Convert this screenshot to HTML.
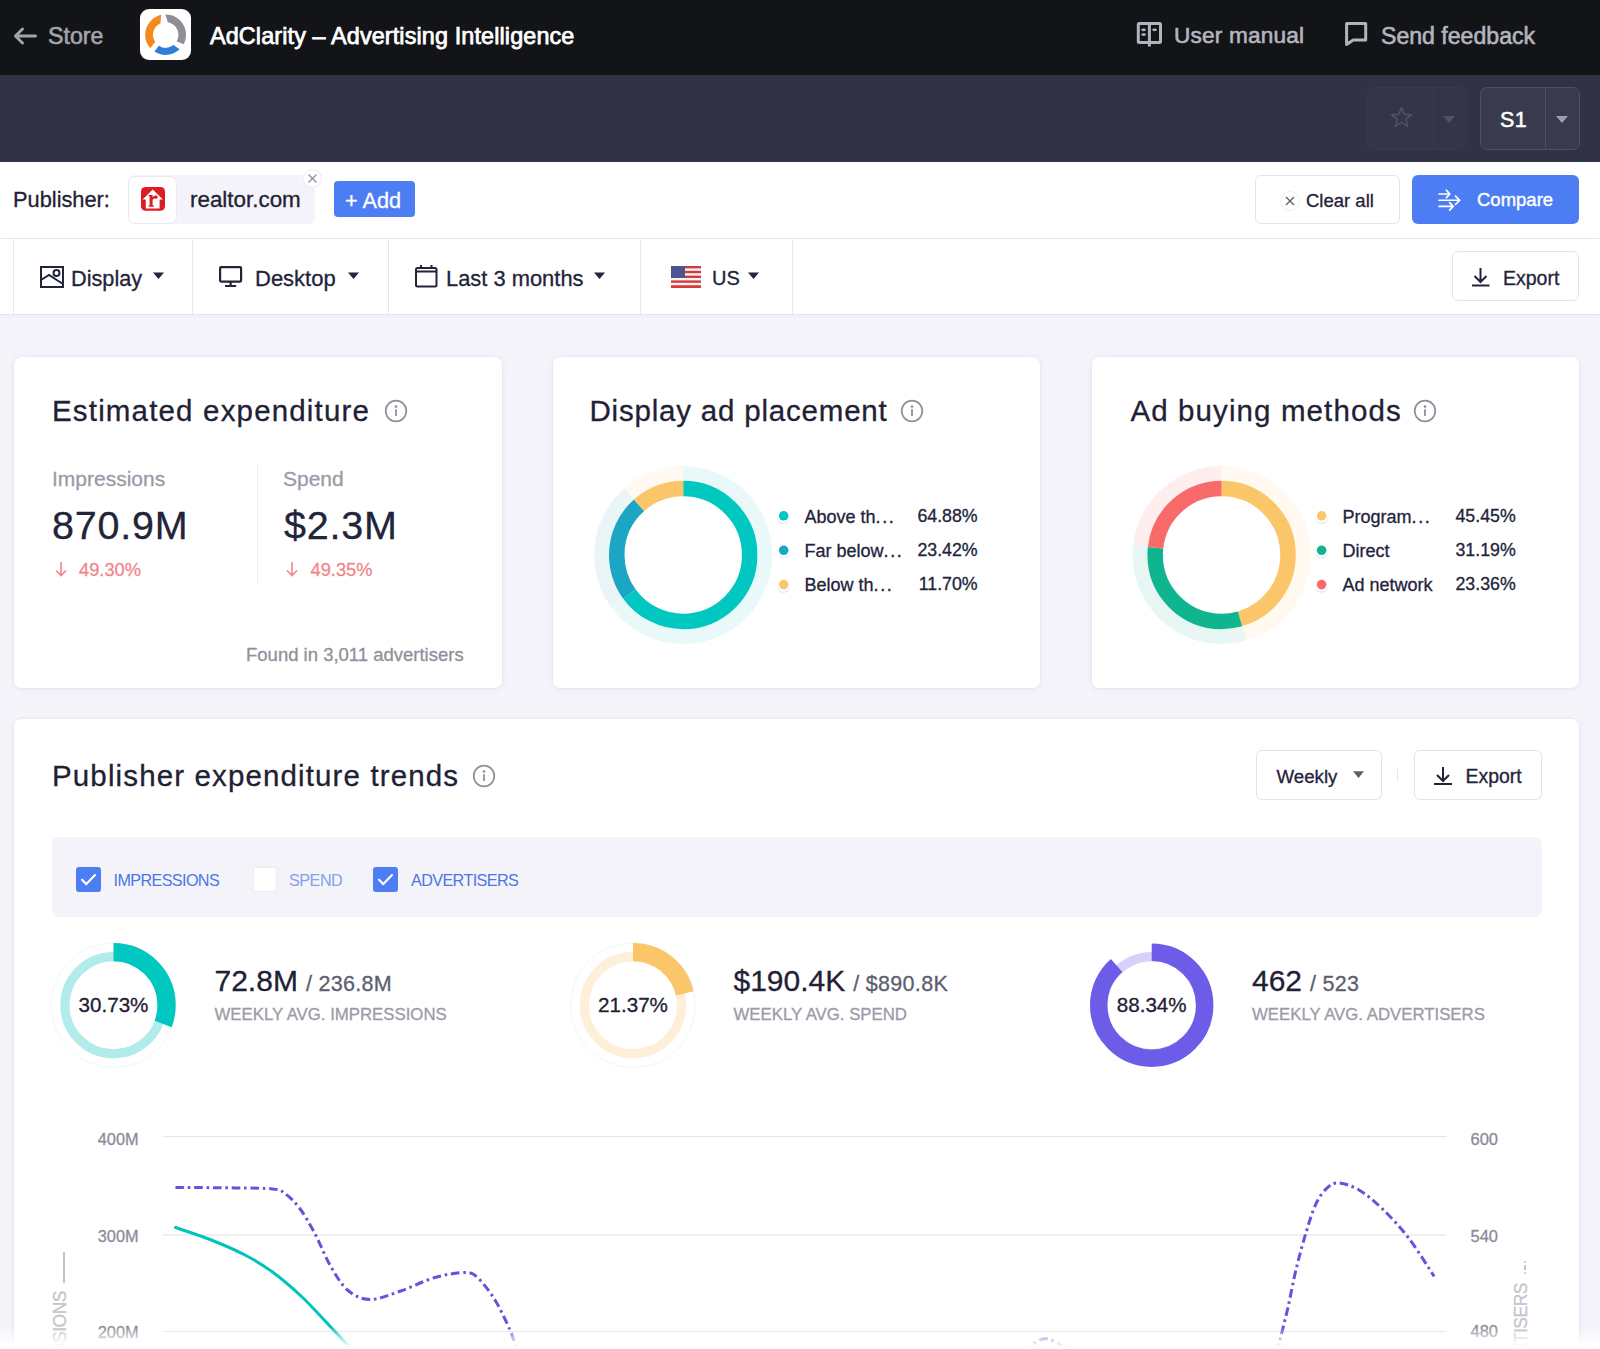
<!DOCTYPE html>
<html><head><meta charset="utf-8">
<style>
*{box-sizing:border-box;margin:0;padding:0}
html,body{width:1600px;height:1349px;overflow:hidden;background:#f5f4fa;font-family:"Liberation Sans",sans-serif;color:#1f2135}
.abs{position:absolute}
.t{position:absolute;white-space:nowrap;line-height:1;-webkit-text-stroke-width:.3px}
#top{position:absolute;left:0;top:0;width:1600px;height:75px;background:#131418}
#bar2{position:absolute;left:0;top:75px;width:1600px;height:87px;background:#323246}
#pub{position:absolute;left:0;top:162px;width:1600px;height:76px;background:#fff}
#publine{position:absolute;left:0;top:238px;width:1600px;height:1px;background:#e6e6ee;z-index:2}
#flt{position:absolute;left:0;top:238px;width:1600px;height:77px;background:#fff;border-bottom:1px solid #e4e4ec;box-shadow:0 1px 4px rgba(60,60,120,.04)}
.btn{position:absolute;border:1px solid #e3e3ea;border-radius:6px;background:#fff}
.card{position:absolute;background:#fff;border-radius:7px;box-shadow:0 0 0 .5px rgba(50,50,110,.06),0 1px 7px rgba(50,50,120,.07)}
.gray{color:#9a9ba6}
.vdiv{position:absolute;top:0;width:1px;height:76px;background:#e6e6ee}
</style></head>
<body>
<!-- TOP BAR -->
<div id="top">
  <svg class="abs" style="left:12px;top:26px" width="26" height="20" viewBox="0 0 26 20"><path d="M23.5 10H3.5M10.5 3L3.5 10l7 7" stroke="#a2a3ab" stroke-width="3" fill="none" stroke-linecap="round" stroke-linejoin="round"/></svg>
  <div class="t" style="left:48px;top:25px;font-size:23.2px;color:#a3a4ac;-webkit-text-stroke-width:.6px">Store</div>
  <div class="abs" style="left:140px;top:9px;width:51px;height:51px;background:#fff;border-radius:9px"></div>
  <svg class="abs" style="left:140px;top:9px" width="51" height="51" viewBox="0 0 51 51">
<path fill="#f28a1f" d="M10.23 39.25A20.5 20.5 0 0 1 21.09 5.83L20.53 14.20A12.7 12.7 0 0 0 15.17 32.90Z"/>
<path fill="#8e8e94" d="M25.35 5.50A20.3 20.3 0 0 1 43.62 35.33L36.59 32.34A12.7 12.7 0 0 0 27.91 13.29Z"/>
<path fill="#2f7fd6" d="M39.66 40.26A20.1 20.1 0 0 1 14.46 42.46L18.86 36.74A12.9 12.9 0 0 0 33.46 36.10Z"/>
</svg>
  <div class="t" style="left:210px;top:25px;font-size:23.4px;color:#fff;-webkit-text-stroke:.75px #fff;letter-spacing:.12px">AdClarity – Advertising Intelligence</div>
  <svg class="abs" style="left:1136px;top:21px" width="27" height="27" viewBox="0 0 27 27" fill="none" stroke="#b2b3bc" stroke-width="3">
    <rect x="2.3" y="2.6" width="22.2" height="19" rx="1"/>
    <path d="M13.4 1.5V25.5"/>
    <g fill="#b2b3bc" stroke="none"><ellipse cx="7.6" cy="8.8" rx="2.4" ry="1.4"/><ellipse cx="7.6" cy="13.6" rx="2.4" ry="1.4"/><ellipse cx="18.6" cy="8.8" rx="2.4" ry="1.4"/></g>
  </svg>
  <div class="t" style="left:1174px;top:25px;font-size:22.6px;color:#b4b5bd;-webkit-text-stroke-width:.6px;letter-spacing:.2px">User manual</div>
  <svg class="abs" style="left:1340px;top:15px" width="34" height="34" viewBox="0 0 34 34" fill="none" stroke="#b2b3bc" stroke-width="3" stroke-linejoin="round">
    <path d="M6.6 29.5V8.5H25.7V24.9H13.2Z"/>
  </svg>
  <div class="t" style="left:1381px;top:25px;font-size:23.1px;color:#b4b5bd;-webkit-text-stroke-width:.6px">Send feedback</div>
</div>
<div id="bar2">
  <div class="abs" style="left:1367px;top:12px;width:100px;height:63px;border:1px solid #38384c;background:#35354a;border-radius:7px"></div>
  <div class="abs" style="left:1433px;top:13px;width:1px;height:61px;background:#3a3a4f"></div>
  <svg class="abs" style="left:1390px;top:106px;top:106px" width="24" height="24" viewBox="0 0 24 24"></svg>
  <svg class="abs" style="left:1390px;top:31px" width="24" height="24" viewBox="0 0 24 24"><path d="M11.5 1.5L14.2 8.4 21.4 8.8 15.8 13.4 17.7 20.4 11.5 16.4 5.3 20.4 7.2 13.4 1.6 8.8 8.8 8.4Z" fill="none" stroke="#50516a" stroke-width="1.6" stroke-linejoin="round"/></svg>
  <svg class="abs" style="left:1443px;top:41px" width="12" height="8" viewBox="0 0 12 8"><path d="M0 0H12L6 7Z" fill="#50516a"/></svg>
  <div class="abs" style="left:1480px;top:12px;width:100px;height:63px;border:1px solid #4e4f63;background:#3a3a4e;border-radius:7px"></div>
  <div class="abs" style="left:1545px;top:13px;width:1px;height:61px;background:#4e4f63"></div>
  <div class="t" style="left:1500px;top:35px;font-size:21.5px;color:#fff;-webkit-text-stroke:.5px #fff;letter-spacing:.5px">S1</div>
  <svg class="abs" style="left:1556px;top:41px" width="12" height="8" viewBox="0 0 12 8"><path d="M0 0H12L6 7Z" fill="#9d9eab"/></svg>
</div>
<!-- PUBLISHER ROW -->
<div id="pub">
  <div class="t" style="left:13px;top:27px;font-size:21.8px">Publisher:</div>
  <div class="abs" style="left:128px;top:13px;width:187px;height:49px;background:#f3f3f9;border-radius:7px"></div>
  <div class="abs" style="left:128px;top:14px;width:49px;height:48px;background:#fff;border:1px solid #e9e9f0;border-radius:7px"></div>
  <svg class="abs" style="left:140px;top:24px" width="26" height="26" viewBox="0 0 26 26">
    <rect x="1" y="1" width="24" height="23.7" rx="4.5" fill="#dd1d26"/>
    <path d="M12.75 3.4L22.9 13.5H19.6V22.5H5.8V13.5H2.6Z" fill="#fff"/>
    <path d="M8.6 9.1H12.6V11.2Q13.6 9.6 15.6 9.5L16.3 12.2Q13.6 11.8 12.6 13.8V19.5H14V20.7H8.5V19.5H9.6V10.3H8.6Z" fill="#dd1d26"/>
    <circle cx="16.1" cy="11.1" r="1.7" fill="#dd1d26"/>
  </svg>
  <div class="t" style="left:190px;top:27px;font-size:22.4px;color:#1f2135">realtor.com</div>
  <div class="abs" style="left:304px;top:8px;width:17px;height:17px;border-radius:50%;background:#fff;box-shadow:0 0 0 1px #ececf2"></div>
  <svg class="abs" style="left:307px;top:11px" width="11" height="11" viewBox="0 0 11 11"><path d="M1.5 1.5l8 8M9.5 1.5l-8 8" stroke="#8b8c96" stroke-width="1.2"/></svg>
  <div class="abs" style="left:334px;top:19px;width:81px;height:36px;background:#4d7df3;border-radius:4px"></div>
  <div class="t" style="left:345px;top:28px;font-size:21.7px;color:#fff">+ Add</div>
  <div class="btn" style="left:1255px;top:13px;width:145px;height:49px"></div>
  <div class="abs" style="left:1281px;top:30px;width:18px;height:18px;border-radius:50%;box-shadow:0 0 0 1px #f0f0f4"></div>
  <svg class="abs" style="left:1285px;top:34px" width="10" height="10" viewBox="0 0 10 10"><path d="M1 1l8 8M9 1l-8 8" stroke="#5c5d68" stroke-width="1.3"/></svg>
  <div class="t" style="left:1306px;top:30px;font-size:18.5px;color:#1f2135">Clear all</div>
  <div class="abs" style="left:1412px;top:13px;width:167px;height:49px;background:#4d7df3;border-radius:6px"></div>
  <svg class="abs" style="left:1437px;top:26px" width="26" height="26" viewBox="0 0 26 26" fill="none" stroke="#fff" stroke-width="1.7" stroke-linecap="round" stroke-linejoin="round">
<path d="M2 6H12.75M9.4 2.2L12.8 6 9.4 9.7"/><path d="M2 12.25H22.75M18.5 8.2L22.75 12.25 18.5 16.4"/><path d="M2 18.4H16.25M12.6 14.7L16.25 18.4 12.6 22.2"/>
</svg>
  <div class="t" style="left:1477px;top:29px;font-size:18.5px;color:#fff;-webkit-text-stroke:.4px #fff">Compare</div>
</div>
<div id="publine"></div>
<!-- FILTER ROW -->
<div id="flt">
  <div class="vdiv" style="left:13px"></div>
  <div class="vdiv" style="left:192px"></div>
  <div class="vdiv" style="left:388px"></div>
  <div class="vdiv" style="left:640px"></div>
  <div class="vdiv" style="left:792px"></div>
  <svg class="abs" style="left:40px;top:28px" width="25" height="23" viewBox="0 0 25 23" fill="none" stroke="#22243a" stroke-width="2">
    <rect x="1" y="1" width="22" height="20"/><path d="M1 14l8-5 14 9"/><circle cx="16.5" cy="7" r="3"/>
  </svg>
  <div class="t" style="left:71px;top:30px;font-size:21.7px;color:#22243a">Display</div>
  <svg class="abs" style="left:153px;top:34px" width="11" height="8" viewBox="0 0 11 8"><path d="M0 0.5H11L5.5 7Z" fill="#22243a"/></svg>
  <svg class="abs" style="left:219px;top:28px" width="24" height="22" viewBox="0 0 24 22" fill="none" stroke="#22243a" stroke-width="2.2">
    <rect x="1.1" y="1.1" width="21" height="14.5" rx="1"/><path d="M11.6 16v3.5M6 20H17.2"/>
  </svg>
  <div class="t" style="left:255px;top:30px;font-size:22px;color:#22243a">Desktop</div>
  <svg class="abs" style="left:348px;top:34px" width="11" height="8" viewBox="0 0 11 8"><path d="M0 0.5H11L5.5 7Z" fill="#22243a"/></svg>
  <svg class="abs" style="left:415px;top:26px" width="23" height="24" viewBox="0 0 23 24" fill="none" stroke="#22243a" stroke-width="2">
    <rect x="1" y="4" width="20.5" height="18.5" rx="1.5"/><path d="M1 7.5H21.5M6 1V5M16.5 1V5"/>
  </svg>
  <div class="t" style="left:446px;top:30px;font-size:21.9px;color:#22243a">Last 3 months</div>
  <svg class="abs" style="left:594px;top:34px" width="11" height="8" viewBox="0 0 11 8"><path d="M0 0.5H11L5.5 7Z" fill="#22243a"/></svg>
  <svg class="abs" style="left:671px;top:28px" width="30" height="22" viewBox="0 0 30 22">
    <rect width="30" height="22" fill="#f4f4f4"/>
    <g fill="#d63a3a"><rect y="0" width="30" height="2.4"/><rect y="4.8" width="30" height="2.4"/><rect y="9.6" width="30" height="2.4"/><rect y="14.4" width="30" height="2.4"/><rect y="19.2" width="30" height="2.8"/></g>
    <rect width="14" height="12" fill="#4a5592"/>
  </svg>
  <div class="t" style="left:712px;top:30px;font-size:20px;color:#22243a">US</div>
  <svg class="abs" style="left:748px;top:34px" width="11" height="8" viewBox="0 0 11 8"><path d="M0 0.5H11L5.5 7Z" fill="#22243a"/></svg>
  <div class="btn" style="left:1452px;top:13px;width:127px;height:50px"></div>
  <svg class="abs" style="left:1471px;top:29px" width="20" height="20" viewBox="0 0 20 20" fill="none" stroke="#22243a" stroke-width="2">
    <path d="M9.5 1V15M3.5 9l6 6 6-6M1 18.5H18.5"/>
  </svg>
  <div class="t" style="left:1503px;top:31px;font-size:19.5px;color:#22243a">Export</div>
</div>
<!-- CARDS -->
<div class="card" style="left:13.5px;top:356.5px;width:488px;height:331px"></div>
<div class="card" style="left:552.5px;top:356.5px;width:487.5px;height:331px"></div>
<div class="card" style="left:1091.5px;top:356.5px;width:487px;height:331px"></div>
<div class="t" style="left:52px;top:395.9px;font-size:29.5px;letter-spacing:1.17px;color:#1f2135">Estimated expenditure</div>
<svg class="abs" style="left:384px;top:399px" width="24" height="24" viewBox="0 0 24 24"><circle cx="12" cy="12" r="10.3" fill="none" stroke="#8f909a" stroke-width="1.7"/><circle cx="12" cy="7.6" r="1.3" fill="#8f909a"/><path d="M12 10.3V17" stroke="#8f909a" stroke-width="1.8"/></svg>
<div class="t" style="left:589.5px;top:395.9px;font-size:29.5px;letter-spacing:.8px;color:#1f2135">Display ad placement</div>
<svg class="abs" style="left:900px;top:399px" width="24" height="24" viewBox="0 0 24 24"><circle cx="12" cy="12" r="10.3" fill="none" stroke="#8f909a" stroke-width="1.7"/><circle cx="12" cy="7.6" r="1.3" fill="#8f909a"/><path d="M12 10.3V17" stroke="#8f909a" stroke-width="1.8"/></svg>
<div class="t" style="left:1130.5px;top:395.9px;font-size:29.5px;letter-spacing:1.1px;color:#1f2135">Ad buying methods</div>
<svg class="abs" style="left:1413px;top:399px" width="24" height="24" viewBox="0 0 24 24"><circle cx="12" cy="12" r="10.3" fill="none" stroke="#8f909a" stroke-width="1.7"/><circle cx="12" cy="7.6" r="1.3" fill="#8f909a"/><path d="M12 10.3V17" stroke="#8f909a" stroke-width="1.8"/></svg>
<div class="t gray" style="left:52px;top:467.9px;font-size:21px;color:#9a9ba6">Impressions</div>
<div class="t" style="left:52px;top:506.2px;font-size:39.5px;letter-spacing:.8px;color:#22243a">870.9M</div>
<svg class="abs" style="left:54.5px;top:561px" width="12" height="16" viewBox="0 0 12 16"><path d="M6 1V14.5M1 9.5l5 5 5-5" fill="none" stroke="#ef878b" stroke-width="1.6"/></svg>
<div class="t" style="left:79px;top:560.5px;font-size:18.3px;color:#ef878b">49.30%</div>
<div class="abs" style="left:257px;top:463px;width:1px;height:121px;background:#ececf2"></div>
<div class="t" style="left:283px;top:467.9px;font-size:21px;color:#9a9ba6">Spend</div>
<div class="t" style="left:284px;top:506.2px;font-size:39.5px;letter-spacing:.8px;color:#22243a">$2.3M</div>
<svg class="abs" style="left:286px;top:561px" width="12" height="16" viewBox="0 0 12 16"><path d="M6 1V14.5M1 9.5l5 5 5-5" fill="none" stroke="#ef878b" stroke-width="1.6"/></svg>
<div class="t" style="left:310.5px;top:560.5px;font-size:18.3px;color:#ef878b">49.35%</div>
<div class="t" style="left:246px;top:645.6px;font-size:18.5px;color:#8f909b">Found in 3,011 advertisers</div>
<svg class="abs" style="left:0;top:0" width="1600" height="700">
<circle cx="683.2" cy="555" r="81.6" fill="none" stroke="#e9f8f8" stroke-width="14.8" stroke-dasharray="332.645 512.708" stroke-dashoffset="0.000" transform="rotate(-90 683.2 555)"/>
<circle cx="683.2" cy="555" r="81.6" fill="none" stroke="#eaf5f8" stroke-width="14.8" stroke-dasharray="120.076 512.708" stroke-dashoffset="-332.645" transform="rotate(-90 683.2 555)"/>
<circle cx="683.2" cy="555" r="81.6" fill="none" stroke="#fff9ef" stroke-width="14.8" stroke-dasharray="59.987 512.708" stroke-dashoffset="-452.721" transform="rotate(-90 683.2 555)"/>
<circle cx="683.2" cy="555" r="66.45" fill="none" stroke="#00c7c0" stroke-width="15.5" stroke-dasharray="270.885 417.518" stroke-dashoffset="0.000" transform="rotate(-90 683.2 555)"/>
<circle cx="683.2" cy="555" r="66.45" fill="none" stroke="#1ba7c4" stroke-width="15.5" stroke-dasharray="97.783 417.518" stroke-dashoffset="-270.885" transform="rotate(-90 683.2 555)"/>
<circle cx="683.2" cy="555" r="66.45" fill="none" stroke="#fbc56a" stroke-width="15.5" stroke-dasharray="48.850 417.518" stroke-dashoffset="-368.668" transform="rotate(-90 683.2 555)"/>
<circle cx="1221.6" cy="555" r="81.6" fill="none" stroke="#fff9ef" stroke-width="14.8" stroke-dasharray="233.026 512.708" stroke-dashoffset="0.000" transform="rotate(-90 1221.6 555)"/>
<circle cx="1221.6" cy="555" r="81.6" fill="none" stroke="#e8f7f3" stroke-width="14.8" stroke-dasharray="159.914 512.708" stroke-dashoffset="-233.026" transform="rotate(-90 1221.6 555)"/>
<circle cx="1221.6" cy="555" r="81.6" fill="none" stroke="#ffeeee" stroke-width="14.8" stroke-dasharray="119.769 512.708" stroke-dashoffset="-392.939" transform="rotate(-90 1221.6 555)"/>
<circle cx="1221.6" cy="555" r="66.45" fill="none" stroke="#fbc56a" stroke-width="15.5" stroke-dasharray="189.762 417.518" stroke-dashoffset="0.000" transform="rotate(-90 1221.6 555)"/>
<circle cx="1221.6" cy="555" r="66.45" fill="none" stroke="#0eb58f" stroke-width="15.5" stroke-dasharray="130.224 417.518" stroke-dashoffset="-189.762" transform="rotate(-90 1221.6 555)"/>
<circle cx="1221.6" cy="555" r="66.45" fill="none" stroke="#f96b6b" stroke-width="15.5" stroke-dasharray="97.532 417.518" stroke-dashoffset="-319.986" transform="rotate(-90 1221.6 555)"/>
<circle cx="783.7" cy="517.8" r="6.5" fill="#f0eff7"/><circle cx="783.7" cy="515.8" r="6.3" fill="#fff"/><circle cx="783.7" cy="515.8" r="4.8" fill="#00c7c0"/>
<circle cx="783.7" cy="552.3" r="6.5" fill="#f0eff7"/><circle cx="783.7" cy="550.3" r="6.3" fill="#fff"/><circle cx="783.7" cy="550.3" r="4.8" fill="#1ba7c4"/>
<circle cx="783.7" cy="586.6" r="6.5" fill="#f0eff7"/><circle cx="783.7" cy="584.6" r="6.3" fill="#fff"/><circle cx="783.7" cy="584.6" r="4.8" fill="#fbc56a"/>
<circle cx="1321.6" cy="517.8" r="6.5" fill="#f0eff7"/><circle cx="1321.6" cy="515.8" r="6.3" fill="#fff"/><circle cx="1321.6" cy="515.8" r="4.8" fill="#fbc56a"/>
<circle cx="1321.6" cy="552.3" r="6.5" fill="#f0eff7"/><circle cx="1321.6" cy="550.3" r="6.3" fill="#fff"/><circle cx="1321.6" cy="550.3" r="4.8" fill="#0eb58f"/>
<circle cx="1321.6" cy="586.6" r="6.5" fill="#f0eff7"/><circle cx="1321.6" cy="584.6" r="6.3" fill="#fff"/><circle cx="1321.6" cy="584.6" r="4.8" fill="#f96b6b"/>
</svg>
<div class="t" style="left:804.5px;top:507.5px;font-size:18px;color:#22243a">Above th<span style=letter-spacing:1.6px>..</span>.</div>
<div class="t" style="left:877.7px;width:100px;text-align:right;top:507.5px;font-size:17.8px;color:#22243a">64.88%</div>
<div class="t" style="left:804.5px;top:541.8px;font-size:18px;color:#22243a">Far below<span style=letter-spacing:1.6px>..</span>.</div>
<div class="t" style="left:877.7px;width:100px;text-align:right;top:541.8px;font-size:17.8px;color:#22243a">23.42%</div>
<div class="t" style="left:804.5px;top:576.1px;font-size:18px;color:#22243a">Below th<span style=letter-spacing:1.6px>..</span>.</div>
<div class="t" style="left:877.7px;width:100px;text-align:right;top:576.1px;font-size:17.8px;color:#22243a">11.70%</div>
<div class="t" style="left:1342.5px;top:507.5px;font-size:18px;color:#22243a">Program<span style=letter-spacing:1.6px>..</span>.</div>
<div class="t" style="left:1415.8px;width:100px;text-align:right;top:507.5px;font-size:17.8px;color:#22243a">45.45%</div>
<div class="t" style="left:1342.5px;top:541.8px;font-size:18px;color:#22243a">Direct</div>
<div class="t" style="left:1415.8px;width:100px;text-align:right;top:541.8px;font-size:17.8px;color:#22243a">31.19%</div>
<div class="t" style="left:1342.5px;top:576.1px;font-size:18px;color:#22243a">Ad network</div>
<div class="t" style="left:1415.8px;width:100px;text-align:right;top:576.1px;font-size:17.8px;color:#22243a">23.36%</div>
<!-- /CARDS -->
<!-- BIG -->
<div class="card" style="left:13.5px;top:719px;width:1565.5px;height:700px"></div>
<div class="t" style="left:52px;top:760.8px;font-size:29.5px;letter-spacing:1.13px;color:#1f2135">Publisher expenditure trends</div>
<svg class="abs" style="left:471.5px;top:764px" width="24" height="24" viewBox="0 0 24 24"><circle cx="12" cy="12" r="10.3" fill="none" stroke="#8f909a" stroke-width="1.7"/><circle cx="12" cy="7.6" r="1.3" fill="#8f909a"/><path d="M12 10.3V17" stroke="#8f909a" stroke-width="1.8"/></svg>
<div class="btn" style="left:1256px;top:750px;width:125.5px;height:49.5px"></div>
<div class="t" style="left:1276.5px;top:767.5px;font-size:18.7px;color:#22243a">Weekly</div>
<svg class="abs" style="left:1353px;top:771px" width="11" height="8" viewBox="0 0 11 8"><path d="M0 0.3H11L5.5 7Z" fill="#5f606c"/></svg>
<div class="abs" style="left:1397px;top:769px;width:1px;height:12px;background:#e3e3ea"></div>
<div class="btn" style="left:1414px;top:750px;width:127.5px;height:49.5px"></div>
<svg class="abs" style="left:1433px;top:766px" width="20" height="20" viewBox="0 0 20 20" fill="none" stroke="#22243a" stroke-width="2"><path d="M10 1V15M4 9l6 6 6-6M1 18H19"/></svg>
<div class="t" style="left:1465.5px;top:766.9px;font-size:19.4px;color:#22243a">Export</div>
<div class="abs" style="left:51.5px;top:836.8px;width:1490px;height:80.2px;background:#f3f3f9;border-radius:7px"></div>
<svg class="abs" style="left:76px;top:867px" width="25" height="25" viewBox="0 0 25 25"><rect x="0" y="0" width="25" height="25" rx="3" fill="#4d7df3"/><path d="M6 12.8l4.3 4.3 8.7-9" fill="none" stroke="#fff" stroke-width="2.2" stroke-linecap="round" stroke-linejoin="round"/></svg>
<div class="t" style="left:113.5px;top:871.9px;font-size:16.2px;letter-spacing:-.62px;-webkit-text-stroke-width:0;color:#4b77e4">IMPRESSIONS</div>
<div class="abs" style="left:252.5px;top:867px;width:24.5px;height:25px;background:#fff;border:1px solid #ebebf1;border-radius:3px"></div>
<div class="t" style="left:289px;top:871.9px;font-size:16.2px;letter-spacing:-.5px;-webkit-text-stroke-width:0;color:#85a2ec">SPEND</div>
<svg class="abs" style="left:373px;top:867px" width="25" height="25" viewBox="0 0 25 25"><rect x="0" y="0" width="25" height="25" rx="3" fill="#4d7df3"/><path d="M6 12.8l4.3 4.3 8.7-9" fill="none" stroke="#fff" stroke-width="2.2" stroke-linecap="round" stroke-linejoin="round"/></svg>
<div class="t" style="left:411px;top:871.9px;font-size:16.2px;letter-spacing:-.62px;-webkit-text-stroke-width:0;color:#4b77e4">ADVERTISERS</div>
<svg class="abs" style="left:0;top:900px" width="1600" height="200">
<circle cx="113.5" cy="105.2" r="62.3" fill="none" stroke="#eef2f4" stroke-width="0.8"/>
<circle cx="113.5" cy="105.2" r="48.6" fill="none" stroke="#b2ecea" stroke-width="9.2"/>
<circle cx="113.5" cy="105.2" r="53.1" fill="none" stroke="#00c7c0" stroke-width="18.2" stroke-dasharray="102.527 333.637" stroke-dashoffset="0.000" transform="rotate(-90 113.5 105.2)"/>
<circle cx="633" cy="105.2" r="62.3" fill="none" stroke="#eef2f4" stroke-width="0.8"/>
<circle cx="633" cy="105.2" r="48.6" fill="none" stroke="#fdefd8" stroke-width="9.2"/>
<circle cx="633" cy="105.2" r="53.1" fill="none" stroke="#fbc56a" stroke-width="18.2" stroke-dasharray="71.298 333.637" stroke-dashoffset="0.000" transform="rotate(-90 633 105.2)"/>
<circle cx="1151.7" cy="105.2" r="48.6" fill="none" stroke="#d7d0f8" stroke-width="9.2"/>
<circle cx="1151.7" cy="105.2" r="53" fill="none" stroke="#6c5ce7" stroke-width="17.4" stroke-dasharray="294.180 333.009" stroke-dashoffset="0.000" transform="rotate(-90 1151.7 105.2)"/>
</svg>
<div class="t" style="left:53.5px;width:120px;text-align:center;top:995.2px;font-size:20.6px;color:#1f2135">30.73%</div>
<div class="t" style="left:573px;width:120px;text-align:center;top:995.2px;font-size:20.6px;color:#1f2135">21.37%</div>
<div class="t" style="left:1091.7px;width:120px;text-align:center;top:995.2px;font-size:20.6px;color:#1f2135">88.34%</div>
<div class="t" style="left:214.5px;top:965.6px;font-size:30px;color:#1f2135">72.8M<span style="font-size:21.5px;color:#5c5e70;margin-left:8px;letter-spacing:.3px">/ 236.8M</span></div>
<div class="t" style="left:214.5px;top:1007.1px;font-size:16.8px;color:#9a9ba7">WEEKLY AVG. IMPRESSIONS</div>
<div class="t" style="left:733.5px;top:965.6px;font-size:30px;color:#1f2135">$190.4K<span style="font-size:21.5px;color:#5c5e70;margin-left:8px;letter-spacing:.3px">/ $890.8K</span></div>
<div class="t" style="left:733.5px;top:1007.1px;font-size:16.8px;color:#9a9ba7">WEEKLY AVG. SPEND</div>
<div class="t" style="left:1252px;top:965.6px;font-size:30px;color:#1f2135">462<span style="font-size:21.5px;color:#5c5e70;margin-left:8px;letter-spacing:.3px">/ 523</span></div>
<div class="t" style="left:1252px;top:1007.1px;font-size:16.8px;color:#9a9ba7">WEEKLY AVG. ADVERTISERS</div>
<!-- /BIG -->
<!-- CHART -->
<svg class="abs" style="left:0;top:1100px" width="1600" height="249" viewBox="0 1100 1600 249">
<rect x="163" y="1135.9" width="1283.5" height="1.2" fill="#e4e4ea"/>
<rect x="163" y="1234.4" width="1283.5" height="1.2" fill="#e4e4ea"/>
<rect x="163" y="1330.9" width="1283.5" height="1.2" fill="#e4e4ea"/>
<path d="M175.50 1227.50 C181.25 1229.50 198.42 1234.92 210.00 1239.50 C221.58 1244.08 234.58 1249.58 245.00 1255.00 C255.42 1260.42 263.17 1265.17 272.50 1272.00 C281.83 1278.83 291.92 1287.50 301.00 1296.00 C310.08 1304.50 318.50 1314.00 327.00 1323.00 C335.50 1332.00 346.17 1343.50 352.00 1350.00 C357.83 1356.50 360.33 1360.00 362.00 1362.00" fill="none" stroke="#00c3bd" stroke-width="3" stroke-linecap="round"/>
<path d="M175.50 1187.40 C185.42 1187.48 218.83 1187.65 235.00 1187.90 C251.17 1188.15 264.17 1187.97 272.50 1188.90 C280.83 1189.83 280.42 1190.19 285.00 1193.50 C289.58 1196.81 295.00 1202.04 300.00 1208.75 C305.00 1215.46 310.00 1224.38 315.00 1233.75 C320.00 1243.12 324.58 1255.62 330.00 1265.00 C335.42 1274.38 340.83 1284.25 347.50 1290.00 C354.17 1295.75 361.25 1299.29 370.00 1299.50 C378.75 1299.71 389.17 1294.92 400.00 1291.25 C410.83 1287.58 424.17 1280.62 435.00 1277.50 C445.83 1274.38 457.92 1272.50 465.00 1272.50 C472.08 1272.50 472.50 1272.92 477.50 1277.50 C482.50 1282.08 489.58 1291.25 495.00 1300.00 C500.42 1308.75 506.67 1322.50 510.00 1330.00 C513.33 1337.50 513.33 1339.17 515.00 1345.00 C516.67 1350.83 519.17 1361.67 520.00 1365.00" fill="none" stroke="#6453dc" stroke-width="3" stroke-dasharray="8.6 3.75 2.6 3.75"/>
<path d="M1272.00 1370.00 C1273.15 1365.67 1276.32 1354.08 1278.90 1344.00 C1281.48 1333.92 1284.63 1321.95 1287.50 1309.50 C1290.37 1297.05 1292.98 1282.23 1296.10 1269.30 C1299.22 1256.37 1302.83 1242.93 1306.20 1231.90 C1309.57 1220.87 1312.70 1210.53 1316.30 1203.10 C1319.90 1195.67 1323.97 1190.65 1327.80 1187.30 C1331.63 1183.95 1334.03 1182.52 1339.30 1183.00 C1344.57 1183.48 1352.22 1185.88 1359.40 1190.20 C1366.58 1194.52 1374.25 1201.00 1382.40 1208.90 C1390.55 1216.80 1399.67 1226.35 1408.30 1237.60 C1416.93 1248.85 1429.88 1269.93 1434.20 1276.40" fill="none" stroke="#6453dc" stroke-width="3" stroke-dasharray="8.6 3.75 2.6 3.75"/>
<path d="M1025.00 1352.00 C1026.33 1350.67 1029.50 1346.20 1033.00 1344.00 C1036.50 1341.80 1041.50 1338.63 1046.00 1338.80 C1050.50 1338.97 1056.33 1342.80 1060.00 1345.00 C1063.67 1347.20 1066.67 1350.83 1068.00 1352.00" fill="none" stroke="#6453dc" stroke-width="3" stroke-dasharray="8.6 3.75 2.6 3.75"/>
</svg>
<div class="t" style="left:38.5px;width:100px;text-align:right;top:1130.8px;font-size:16.3px;color:#8b8c97">400M</div>
<div class="t" style="left:38.5px;width:100px;text-align:right;top:1228.2px;font-size:16.3px;color:#8b8c97">300M</div>
<div class="t" style="left:38.5px;width:100px;text-align:right;top:1323.6px;font-size:16.3px;color:#8b8c97">200M</div>
<div class="t" style="left:1470.5px;top:1130.6px;font-size:16.5px;color:#8b8c97">600</div>
<div class="t" style="left:1470.5px;top:1228.0px;font-size:16.5px;color:#8b8c97">540</div>
<div class="t" style="left:1470.5px;top:1323.0px;font-size:16.5px;color:#8b8c97">480</div>
<div class="t" style="left:52px;top:1291px;transform-origin:0 0;transform:rotate(-90deg) translateX(-100%);font-size:17.5px;color:#c3c4cc;letter-spacing:-.5px">IMPRESSIONS</div>
<div class="abs" style="left:63.2px;top:1252px;width:1.8px;height:30.5px;background:#c3c4cc"></div>
<div class="t" style="left:1512.5px;top:1283px;transform-origin:0 0;transform:rotate(-90deg) translateX(-100%);font-size:17.5px;color:#c3c4cc;letter-spacing:-.5px">ADVERTISERS</div>
<div class="abs" style="left:1524px;top:1261px;width:2.2px;height:2.2px;background:#c3c4cc;border-radius:1px"></div>
<div class="abs" style="left:1524px;top:1265px;width:2.2px;height:5px;background:#c3c4cc"></div>
<div class="abs" style="left:1524px;top:1272px;width:2.2px;height:2.2px;background:#c3c4cc;border-radius:1px"></div>
<div class="abs" style="left:0;top:1327px;width:1600px;height:22px;background:linear-gradient(to bottom,rgba(255,255,255,0) 0%,rgba(255,255,255,.6) 50%,#fff 90%)"></div>
<!-- /CHART -->
</body></html>
